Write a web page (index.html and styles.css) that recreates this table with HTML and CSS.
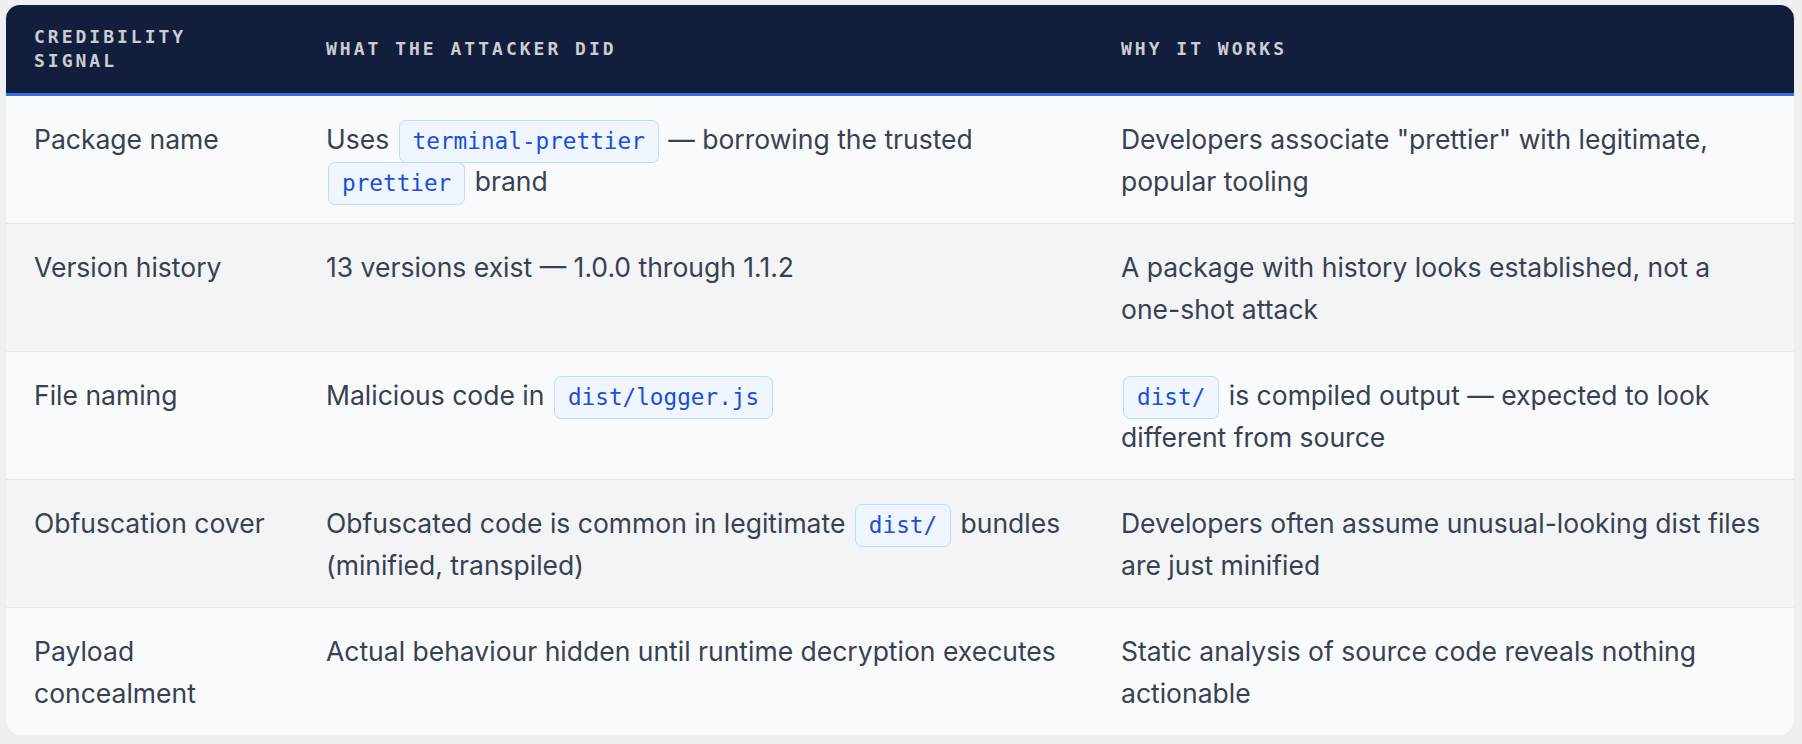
FILE: index.html
```html
<!DOCTYPE html>
<html lang="en">
<head>
<meta charset="utf-8">
<title>Credibility signals</title>
<link rel="stylesheet" href="styles.css">
</head>
<body>
<div class="card">
  <table class="signals">
    <colgroup>
      <col class="c1">
      <col class="c2">
      <col class="c3">
    </colgroup>
    <thead>
      <tr>
        <th>Credibility Signal</th>
        <th>What the attacker did</th>
        <th>Why it works</th>
      </tr>
    </thead>
    <tbody>
      <tr>
        <td>Package name</td>
        <td>Uses <code>terminal-prettier</code> — borrowing the trusted <code>prettier</code> brand</td>
        <td>Developers associate "prettier" with legitimate, popular tooling</td>
      </tr>
      <tr>
        <td>Version history</td>
        <td>13 versions exist — 1.0.0 through 1.1.2</td>
        <td>A package with history looks established, not a one-shot attack</td>
      </tr>
      <tr>
        <td>File naming</td>
        <td>Malicious code in <code>dist/logger.js</code></td>
        <td><code>dist/</code> is compiled output — expected to look different from source</td>
      </tr>
      <tr>
        <td>Obfuscation cover</td>
        <td>Obfuscated code is common in legitimate <code>dist/</code> bundles (minified, transpiled)</td>
        <td>Developers often assume unusual-looking dist files are just minified</td>
      </tr>
      <tr>
        <td>Payload concealment</td>
        <td>Actual behaviour hidden until runtime decryption executes</td>
        <td>Static analysis of source code reveals nothing actionable</td>
      </tr>
    </tbody>
  </table>
</div>
</body>
</html>
```

FILE: styles.css
```css
html, body {
  margin: 0;
  background: #eff0f2;
}
body {
  padding: 5px 8px 0 6px;
  font-family: Inter, "Noto Sans", sans-serif;
}
.card {
  border-radius: 14px;
  overflow: hidden;
  background: #f9fafb;
  box-shadow: 0 1px 2px rgba(15, 23, 42, 0.06);
}
.signals {
  width: 100%;
  border-collapse: collapse;
  table-layout: fixed;
}
.c1 { width: 292px; }
.c2 { width: 795px; }
.signals thead th {
  background: #121f3c;
  color: #c9ced6;
  font-family: "DejaVu Sans Mono", "Liberation Mono", monospace;
  font-weight: bold;
  font-size: 18px;
  letter-spacing: 3px;
  line-height: 24px;
  text-transform: uppercase;
  text-align: left;
  vertical-align: middle;
  padding: 20px 28px;
  border-bottom: 3px solid #3b6fe5;
}
.signals td {
  color: #374151;
  font-size: 26.5px;
  line-height: 42px;
  padding: 22px 28px 21px;
  vertical-align: top;
  border-bottom: 1px solid #e5e7eb;
}
.signals tbody tr:nth-child(odd) td { background: #f9fafb; }
.signals tbody tr:nth-child(even) td { background: #f3f4f6; }
.signals tbody tr:last-child td { border-bottom: 0; }
.signals code {
  font-family: "DejaVu Sans Mono", "Liberation Mono", monospace;
  font-size: 22.7px;
  line-height: 1;
  color: #1d4ed8;
  background: #eff6ff;
  border: 1.5px solid #bfdbfe;
  border-radius: 7px;
  padding: 7px 13px 8px;
  margin: 0 2px;
  white-space: nowrap;
}
```
